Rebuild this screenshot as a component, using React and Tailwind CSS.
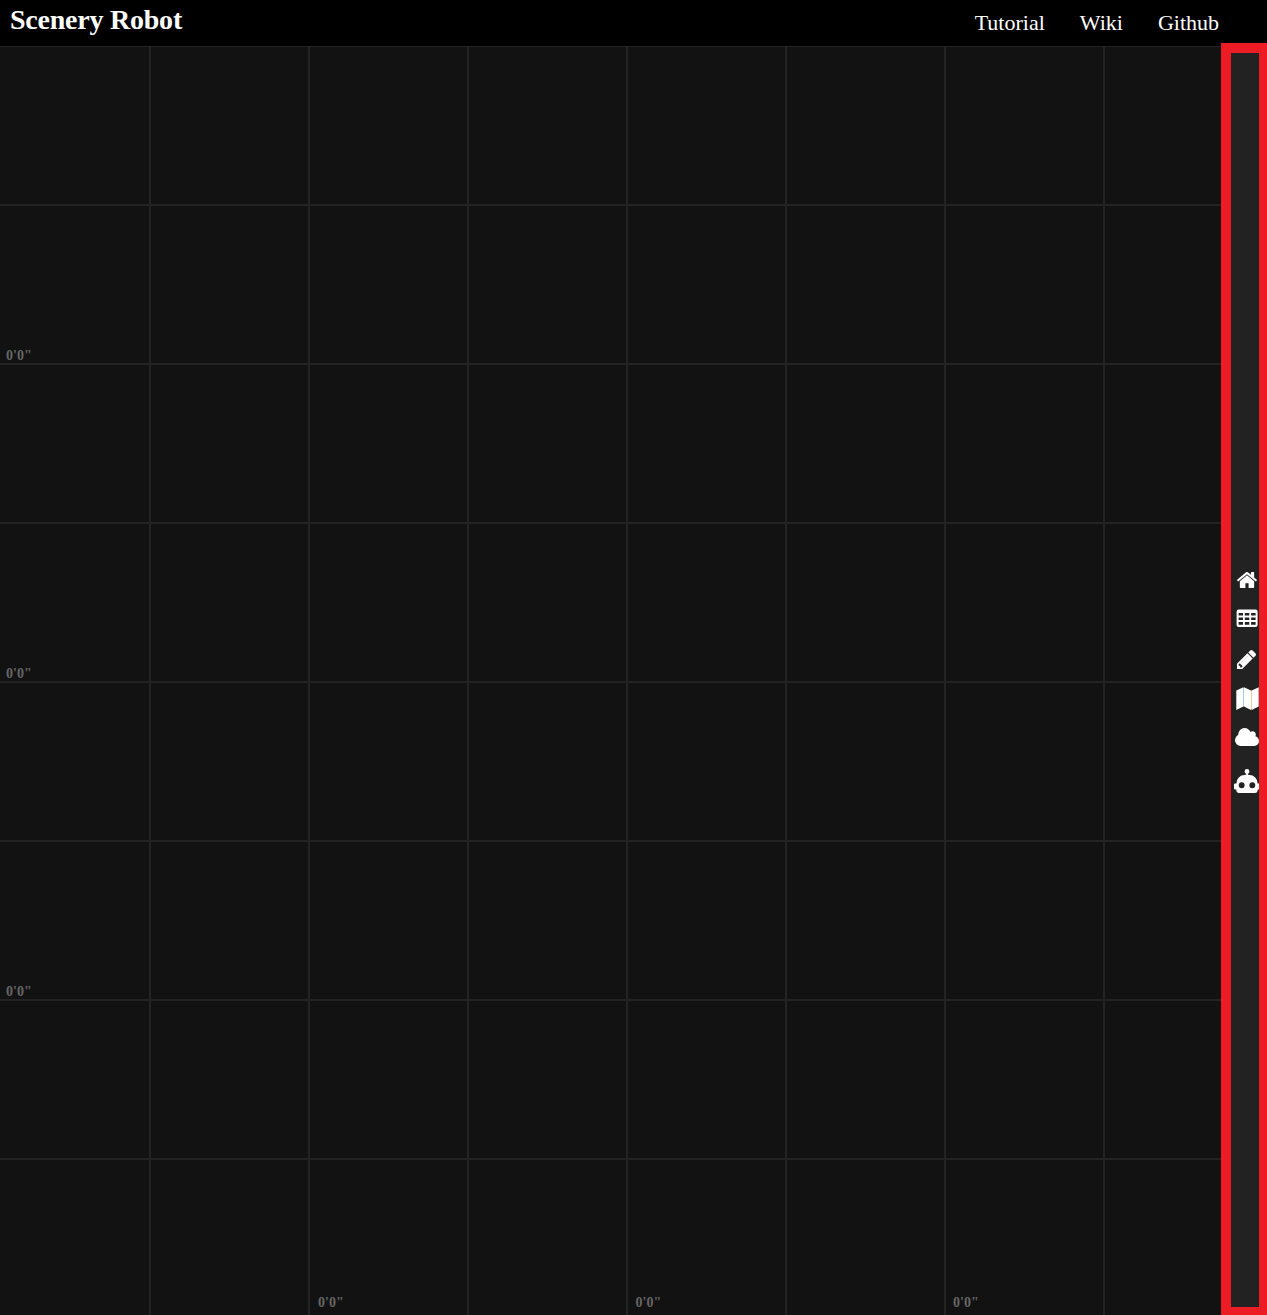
const links = ["Tutorial", "Wiki", "Github"];

function HomeIcon() {
  return (
    <svg className="h-[16px] w-[20px]" viewBox="89 253 1614 1283" preserveAspectRatio="none" fill="currentColor">
      <path d="M1472 992v480q0 26-19 45t-45 19h-384v-384h-256v384h-384q-26 0-45-19t-19-45v-480q0-1 .5-3t.5-3l575-474 575 474q1 2 1 6zm223-69l-62 74q-8 9-21 11h-3q-13 0-21-7l-692-577-692 577q-12 8-24 7-13-2-21-11l-62-74q-8-10-7-23.5t11-21.5l719-599q32-26 76-26t76 26l244 204v-195q0-14 9-23t23-9h192q14 0 23 9t9 23v408l219 182q10 8 11 21.5t-7 23.5z" />
    </svg>
  );
}

function TableIcon() {
  return (
    <svg className="h-[18px] w-[22px]" viewBox="0 0 22 18" fill="currentColor" fillRule="evenodd">
      <path d="M2.600 .4h17a2 2 0 0 1 2 2v13.500a2 2 0 0 1-2 2H2.600a2 2 0 0 1-2-2V2.400a2 2 0 0 1 2-2zM2.600 4v2.500h4.400V4zM8.800 4v2.500h4.500V4zM15.100 4v2.500h4.500V4zM2.600 8.500V11h4.400V8.500zM8.800 8.500V11h4.500V8.500zM15.100 8.500V11h4.500V8.500zM2.600 13v2.700h4.400V13zM8.800 13v2.700h4.500V13zM15.100 13v2.700h4.500V13z" />
    </svg>
  );
}

function PencilIcon() {
  return (
    <svg className="size-[19px]" viewBox="128 149 1515 1515" fill="currentColor">
      <path d="M491 1536l91-91-235-235-91 91v107h128v128h107zm469-1120l416 416-832 832h-416v-416zm683 96q0 53-37 90l-166 166-416-416 166-165q36-38 90-38 53 0 91 38l235 234q37 39 37 91z" />
      <path d="M992 625 436 1181" stroke="#222222" strokeWidth="44" strokeOpacity=".35" />
    </svg>
  );
}

function MapIcon() {
  return (
    <svg className="h-[23px] w-[23px]" viewBox="0 0 23 23">
      <path d="M.3 3.500 7.300 .2V19.500L.3 22.900zM8 .2 15 3.500V22.900L8 19.500zM15.700 3.500 22.700 .2V19.500L15.700 22.900z" fill="currentColor" />
      <path d="M7.500 .8V19.500" stroke="#a7d0ee" />
      <path d="M15.500 3.500V22.500" stroke="#f5d09c" />
    </svg>
  );
}

function CloudIcon() {
  return (
    <svg className="h-[18px] w-[24px]" viewBox="64 128 1920 1408" preserveAspectRatio="none" fill="currentColor">
      <path d="M1984 1152q0 159-112.5 271.5t-271.5 112.5h-1088q-185 0-316.5-131.5t-131.5-316.5q0-132 71-241.5t187-163.5q-2-28-2-43 0-212 150-362t362-150q158 0 286.5 88t187.5 230q70-62 166-62 106 0 181 75t75 181q0 75-41 138 129 30 213 134.5t84 239.500z" />
    </svg>
  );
}

function RobotIcon() {
  return (
    <svg className="h-[24px] w-[26px]" viewBox="1 2 22 20" preserveAspectRatio="none" fill="currentColor">
      <path d="M12,2A2,2 0 0,1 14,4C14,4.74 13.6,5.39 13,5.73V7H14A7,7 0 0,1 21,14H22A1,1 0 0,1 23,15V18A1,1 0 0,1 22,19H21V20A2,2 0 0,1 19,22H5A2,2 0 0,1 3,20V19H2A1,1 0 0,1 1,18V15A1,1 0 0,1 2,14H3A7,7 0 0,1 10,7H11V5.73C10.4,5.39 10,4.74 10,4A2,2 0 0,1 12,2M7.5,13A2.5,2.5 0 0,0 5,15.5A2.5,2.5 0 0,0 7.5,18A2.5,2.5 0 0,0 10,15.5A2.5,2.5 0 0,0 7.5,13M16.5,13A2.5,2.5 0 0,0 14,15.5A2.5,2.5 0 0,0 16.5,18A2.5,2.5 0 0,0 19,15.5A2.5,2.5 0 0,0 16.5,13Z" />
    </svg>
  );
}

const tools = [
  ["Home", HomeIcon, "mt-[519px] ml-[6px]"],
  ["Table", TableIcon, "mt-[21px] ml-[5px]"],
  ["Draw", PencilIcon, "mt-[23px] ml-[6px]"],
  ["Map", MapIcon, "mt-[18px] ml-[5px]"],
  ["Cloud", CloudIcon, "mt-[18px] ml-[4px]"],
  ["Robot", RobotIcon, "mt-[23px] ml-[3px]"],
];

function Toolbar() {
  return (
    <aside className="-mt-[3px] flex h-[1272px] w-[46px] shrink-0 flex-col items-start overflow-hidden border-t-10 border-r-8 border-b-8 border-l-10 border-[#ed1c24] bg-[#222222] text-white">
      {tools.map(([name, Icon, place]) => (
        <button key={name} aria-label={name} className={`block shrink-0 [&>svg]:max-w-none ${place}`}>
          <Icon />
        </button>
      ))}
    </aside>
  );
}

export default function App() {
  return (
    <div className="flex h-[1315px] w-[1267px] flex-col overflow-hidden bg-black font-['Liberation_Serif',serif]">
      <header className="flex h-[46px] shrink-0 justify-between pr-[48px] pl-[10px] text-white">
        <h1 className="mt-[3px] text-[28px] leading-[34px] font-bold tracking-[-0.23px] whitespace-nowrap">Scenery Robot</h1>
        <nav className="mt-[9px] flex gap-[35px] text-[22px] leading-[28px]">
          {links.map((label) => (
            <a key={label} href="#">{label}</a>
          ))}
        </nav>
      </header>
      <div className="flex h-[1269px]">
        <main className="flex w-[1221px] flex-col bg-[#121212] bg-[linear-gradient(to_right,#232323_2px,transparent_2px),linear-gradient(to_bottom,#232323_2px,transparent_2px)] bg-size-[159px_159px] bg-position-[149px_-1px] pt-[301px] text-[14px] leading-[18px] font-bold text-[#666666]">
          <span className="ml-[6px] h-[318px]">0'0"</span>
          <span className="ml-[6px] h-[318px]">0'0"</span>
          <span className="ml-[6px] h-[311px]">0'0"</span>
          <div className="ml-[318px] flex">
            <span className="w-[317.5px]">0'0"</span>
            <span className="w-[317.5px]">0'0"</span>
            <span>0'0"</span>
          </div>
        </main>
        <Toolbar />
      </div>
    </div>
  );
}
